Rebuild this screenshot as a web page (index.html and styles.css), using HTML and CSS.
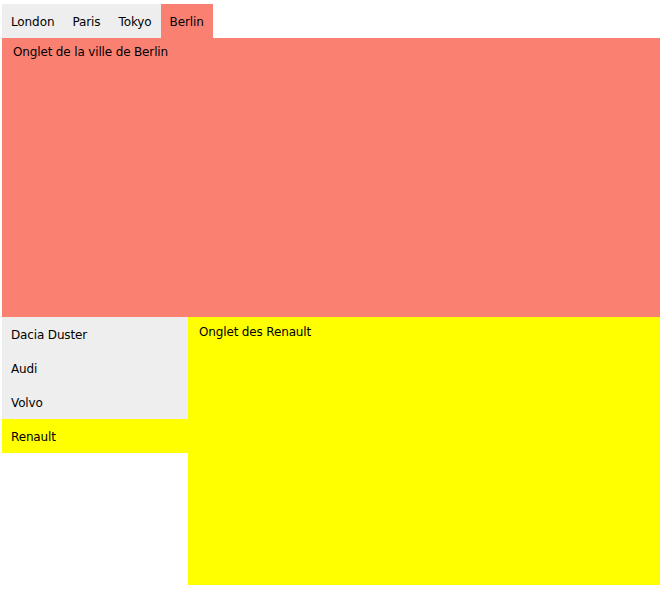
FILE: index.html
```html
<!DOCTYPE html>
<html>
<head>
<meta charset="utf-8">
<link rel="stylesheet" href="styles.css">
</head>
<body>
<div class="tabs">
  <button class="tab">London</button>
  <button class="tab">Paris</button>
  <button class="tab">Tokyo</button>
  <button class="tab active-city">Berlin</button>
</div>
<div class="city-panel">Onglet de la ville de Berlin</div>
<div class="cars">
  <div class="vtabs">
    <button class="vtab">Dacia Duster</button>
    <button class="vtab">Audi</button>
    <button class="vtab">Volvo</button>
    <button class="vtab active-car">Renault</button>
  </div>
  <div class="car-panel">Onglet des Renault</div>
</div>
</body>
</html>
```
FILE: styles.css
```css
html, body {
  margin: 0;
  padding: 0;
}
body {
  padding: 4px 0 0 2px;
  font-family: "DejaVu Sans", Verdana, sans-serif;
  font-size: 12px;
  letter-spacing: -0.15px;
  color: #000;
}
button {
  font-family: inherit;
  font-size: 12px;
  color: #000;
  border: none;
  margin: 0;
  outline: none;
  cursor: pointer;
}
.tabs {
  display: flex;
}
.tab {
  background: #eeeeee;
  height: 34px;
  box-sizing: border-box;
  padding: 3px 9px 0;
  line-height: 31px;
  letter-spacing: -0.1px;
}
.active-city {
  background: #fa8072;
}
.city-panel {
  background: #fa8072;
  height: 279px;
  box-sizing: border-box;
  padding: 7px 11px;
  line-height: 14px;
}
.cars {
  display: flex;
  align-items: flex-start;
}
.vtabs {
  display: flex;
  flex-direction: column;
  width: 186px;
}
.vtab {
  background: #eeeeee;
  height: 34px;
  box-sizing: border-box;
  padding: 2px 9px 0;
  text-align: left;
  line-height: 32px;
  letter-spacing: -0.15px;
}
.active-car {
  background: #ffff00;
}
.car-panel {
  flex: 1;
  background: #ffff00;
  height: 268px;
  box-sizing: border-box;
  padding: 8px 11px;
  line-height: 14px;
}
```
